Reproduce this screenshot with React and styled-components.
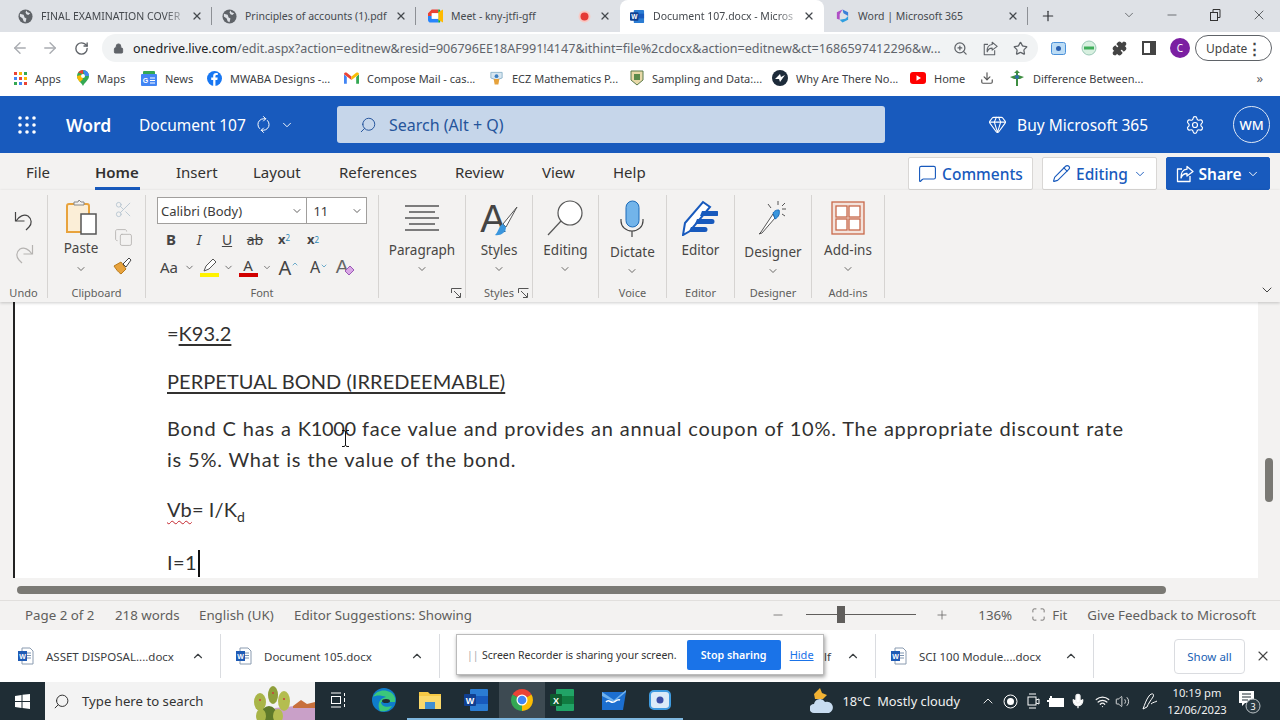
import React from "react";
import styled, { createGlobalStyle } from "styled-components";
import {
  ArrowLeft, ArrowRight, RotateCw, Lock, ZoomIn, Star, Puzzle, ChevronDown, ChevronUp, X, Minus, Plus,
  Search, Settings, Gem, MessageSquare, Pencil, Scissors, Copy, RefreshCw, Download, Maximize, Mic,
  Volume2, Wifi,
} from "lucide-react";

const GlobalStyle = createGlobalStyle`
  html, body { margin: 0; padding: 0; width: 1280px; height: 720px; overflow: hidden; background: #fff; }
  body { font-family: "Noto Sans", "Liberation Sans", sans-serif; }
  * { box-sizing: border-box; }
`;

const Screen = styled.div`
  width: 1280px;
  height: 720px;
  display: flex;
  flex-direction: column;
  position: relative;
  overflow: hidden;
`;

/* chrome */
const TabStrip = styled.div`
  height: 32px;
  background: #dee1e6;
  display: flex;
  align-items: stretch;
  padding-left: 8px;
  flex: none;
`;
const Tab = styled.div`
  width: 204px;
  display: flex;
  align-items: center;
  padding: 0 9px 0 ${(p) => p.$pl || 10}px;
  font-size: 10.5px;
  color: #45494e;
  position: relative;
  background: ${(p) => (p.$active ? "#fff" : "transparent")};
  border-radius: ${(p) => (p.$active ? "8px 8px 0 0" : "0")};
  &::after {
    content: "";
    display: ${(p) => (p.$sep ? "block" : "none")};
    position: absolute;
    right: 0;
    top: 7px;
    bottom: 7px;
    width: 1px;
    background: #8d9095;
  }
`;
const TabTitle = styled.span`
  flex: 1;
  margin-left: 8px;
  white-space: nowrap;
  mask-image: ${(p) => (p.$fade ? "linear-gradient(to right, #000 82%, transparent)" : "none")};
`;
const RecDot = styled.svg`
  margin-right: 8px;
`;
const WindowControls = styled.div`
  margin-left: auto;
  display: flex;
  align-items: center;
  padding-right: 13px;
  gap: 29px;
  color: #3c4043;
  height: 30px;
`;
const NewTab = styled.div`
  display: flex;
  align-items: center;
  margin-left: 12px;
  color: #303236;
`;
const Toolbar = styled.div`
  height: 32px;
  background: #fff;
  display: flex;
  align-items: center;
  padding-left: 11px;
  flex: none;
`;
const NavIcons = styled.div`
  display: flex;
  gap: 12px;
  width: 91px;
  align-items: center;
`;
const Reload = styled(RotateCw)`
  margin-left: 3px;
`;
const Omnibox = styled.div`
  width: 936px;
  margin-right: 13px;
  height: 28px;
  border-radius: 14px;
  background: #f1f3f4;
  display: flex;
  align-items: center;
  padding: 0 10px 0 11px;
  font-size: 12.55px;
  color: #60646b;
  white-space: nowrap;
`;
const UrlHost = styled.span`
  color: #202124;
`;
const Url = styled.span`
  margin-left: 9px;
  flex: 1;
`;
const OmniActions = styled.div`
  display: flex;
  gap: 15px;
  align-items: center;
  color: #5f6368;
`;
const ExtIcons = styled.div`
  display: flex;
  gap: 15px;
  align-items: center;
`;
const Avatar = styled.div`
  width: 20px;
  height: 20px;
  border-radius: 50%;
  background: #7b1fa2;
  color: #fff;
  font-size: 10px;
  display: flex;
  align-items: center;
  justify-content: center;
  margin-left: -1px;
`;
const UpdateBtn = styled.div`
  width: 77px;
  height: 26px;
  margin-left: 5px;
  border: 1px solid #5f6368;
  border-radius: 13px;
  font-size: 12px;
  color: #444;
  display: flex;
  align-items: center;
  justify-content: space-between;
  padding: 0 9px 0 10px;
`;
const Dots = styled.span`
  font-weight: 700;
  font-size: 15px;
  line-height: 1;
`;
const BookmarkBar = styled.div`
  height: 32px;
  background: #fff;
  display: flex;
  align-items: center;
  padding: 0 0 4px 14px;
  font-size: 11px;
  color: #3c4043;
  flex: none;
`;
const Bookmark = styled.div`
  width: ${(p) => p.$w}px;
  display: flex;
  align-items: center;
  gap: 8px;
  white-space: nowrap;
  flex: none;
`;
const More = styled.span`
  margin-left: auto;
  padding-right: 17px;
  font-size: 13px;
  color: #5f6368;
`;

/* word header */
const AppHeader = styled.div`
  height: 57px;
  background: #185abd;
  color: #fff;
  display: flex;
  align-items: center;
  padding-left: 18px;
  flex: none;
`;
const Brand = styled.span`
  font-size: 17.5px;
  font-weight: 600;
  margin-left: 30px;
  width: 73px;
`;
const DocName = styled.span`
  font-size: 15.5px;
  width: 117px;
  white-space: nowrap;
`;
const SyncIcon = styled(RefreshCw)`
  transform: rotate(-45deg);
`;
const DocCaret = styled(ChevronDown)`
  margin-left: 9px;
`;
const SearchBox = styled.div`
  width: 548px;
  height: 37px;
  margin-left: 43px;
  background: #c6d6ea;
  border-radius: 3px;
  display: flex;
  align-items: center;
  gap: 12px;
  padding-left: 22px;
  font-size: 16px;
  color: #25549b;
`;
const MirrorSearch = styled(Search)`
  transform: scaleX(-1);
`;
const HeaderRight = styled.div`
  margin-left: auto;
  display: flex;
  align-items: center;
  padding-right: 10px;
  font-size: 15.5px;
`;
const Initials = styled.div`
  width: 37px;
  height: 37px;
  border-radius: 50%;
  border: 1px solid #dfe8f5;
  font-size: 13px;
  display: flex;
  align-items: center;
  justify-content: center;
  font-weight: 500;
  margin-left: 28px;
`;
const Buy = styled.span`
  margin: 0 37px 0 10px;
`;

/* menu row */
const MenuRow = styled.div`
  height: 37px;
  background: #f3f2f1;
  display: flex;
  align-items: stretch;
  padding-left: 26px;
  flex: none;
`;
const MenuItem = styled.div`
  width: ${(p) => p.$w}px;
  font-size: 15px;
  color: #323130;
  font-weight: ${(p) => (p.$active ? 600 : 400)};
  display: flex;
  align-items: center;
  position: relative;
  height: 37px;
  &::after {
    content: "";
    display: ${(p) => (p.$active ? "block" : "none")};
    position: absolute;
    left: 0;
    bottom: 0;
    width: 45px;
    height: 3px;
    background: #185abd;
  }
`;
const MenuActions = styled.div`
  margin-left: auto;
  display: flex;
  gap: 9px;
  padding: 4px 10px 0 0;
`;
const ActionBtn = styled.div`
  width: ${(p) => p.$w}px;
  height: 33px;
  border-radius: 2px;
  border: 1px solid ${(p) => (p.$primary ? "#185abd" : "#d9d7d5")};
  background: ${(p) => (p.$primary ? "#185abd" : "#fff")};
  color: ${(p) => (p.$primary ? "#fff" : "#185abd")};
  font-size: 15.5px;
  font-weight: ${(p) => (p.$primary ? 600 : 500)};
  display: flex;
  align-items: center;
  justify-content: center;
  gap: 5px;
`;

/* ribbon */
const Ribbon = styled.div`
  height: 112px;
  background: #f3f2f1;
  display: flex;
  padding-top: 5px;
  position: relative;
  flex: none;
  box-shadow: 0 1px 3px rgba(0, 0, 0, 0.2);
  z-index: 2;
`;
const Group = styled.div`
  width: ${(p) => p.$w}px;
  height: 103px;
  border-right: 1px solid #d6d4d2;
  display: flex;
  flex-direction: column;
  flex: none;
  position: relative;
`;
const GroupBody = styled.div`
  flex: 1;
  display: flex;
  justify-content: ${(p) => p.$justify || "center"};
  padding-left: ${(p) => p.$pad || 0}px;
`;
const GroupLabel = styled.div`
  height: 17px;
  margin-bottom: -4px;
  font-size: 11px;
  line-height: 15px;
  color: #605e5c;
  text-align: center;
`;
const BigButton = styled.div`
  display: flex;
  flex-direction: column;
  align-items: center;
  color: #444;
  font-size: 13.5px;
`;
const BigIcon = styled.div`
  height: 46px;
  display: flex;
  align-items: center;
  justify-content: center;
`;
const BigLabel = styled.div`
  line-height: 19px;
  margin-top: ${(p) => p.$drop || 0}px;
  color: #484644;
`;
const Caret = styled.div`
  height: 17px;
  display: flex;
  align-items: center;
  color: #484644;
`;
const Launcher = styled.svg`
  position: absolute;
  right: 3px;
  bottom: -1px;
`;
const UndoCol = styled.div`
  display: flex;
  flex-direction: column;
  align-items: center;
  gap: 11px;
  padding-top: 14px;
  width: 46px;
`;
const ClipRow = styled.div`
  display: flex;
  width: 100%;
`;
const PasteCol = styled.div`
  width: 66px;
  display: flex;
  flex-direction: column;
  align-items: center;
  font-size: 13.5px;
  color: #484644;
`;
const PasteLabel = styled.div`
  line-height: 19px;
  margin-top: -2px;
  margin-bottom: 2px;
`;
const SmallCol = styled.div`
  display: flex;
  flex-direction: column;
  align-items: center;
  gap: 9px;
  padding-top: 5px;
  width: 18px;
`;
const FontRows = styled.div`
  display: flex;
  flex-direction: column;
`;
const SelectRow = styled.div`
  display: flex;
  height: 27px;
  margin: 2px 0 1px;
  width: 210px;
  border: 1px solid #a19f9d;
  background: #fff;
`;
const Select = styled.div`
  width: ${(p) => p.$w}px;
  display: flex;
  align-items: center;
  justify-content: space-between;
  padding: 0 3px 0 3px;
  font-size: 13px;
  color: #3b3a39;
  border-right: ${(p) => (p.$div ? "1px solid #a19f9d" : "none")};
`;
const ToolRow = styled.div`
  display: flex;
  height: 28px;
  align-items: center;
`;
const ToolBtn = styled.div`
  width: ${(p) => p.$w || 28}px;
  flex: none;
  display: flex;
  align-items: center;
  justify-content: center;
  color: #444;
  font-size: ${(p) => p.$size || 14}px;
  font-weight: ${(p) => (p.$bold ? 700 : 400)};
  font-style: ${(p) => (p.$italic ? "italic" : "normal")};
  text-decoration: ${(p) => p.$deco || "none"};
`;
const Scripted = styled.span`
  font-size: 8px;
  color: #2b88b8;
  align-self: ${(p) => (p.$up ? "flex-start" : "flex-end")};
  font-weight: 400;
  line-height: 10px;
  margin-top: ${(p) => (p.$up ? 5 : 0)}px;
  margin-bottom: ${(p) => (p.$up ? 0 : 5)}px;
`;
const SizeArrow = styled.span`
  display: flex;
  align-self: flex-start;
  margin-top: 6px;
  color: #2b88b8;
`;
const ColorA = styled.div`
  display: flex;
  flex-direction: column;
  align-items: center;
  font-size: 15px;
  line-height: 14px;
  color: #444;
`;
const ColorBar = styled.div`
  width: 19px;
  height: 4px;
  background: ${(p) => p.$c};
  margin-top: 1px;
`;
const RibbonToggle = styled.div`
  position: absolute;
  right: 5px;
  bottom: 4px;
  color: #444;
  display: flex;
`;

/* document */
const DocArea = styled.div`
  height: 278px;
  display: flex;
  background: #f3f2f1;
  flex: none;
`;
const Page = styled.div`
  margin-left: 13px;
  width: 1245px;
  background: #fff;
  border-left: 2px solid #222;
  padding: 16px 0 0 152px;
  color: #323130;
  font-family: Lato, "Noto Sans", sans-serif;
  font-size: 20px;
  line-height: 31px;
  position: relative;
  overflow: hidden;
  white-space: nowrap;
  margin-bottom: 2px;
`;
const Line = styled.div`
  margin-top: ${(p) => p.$mt || 0}px;
  letter-spacing: ${(p) => p.$ls}px;
  word-spacing: ${(p) => p.$ws || 0}px;
`;
const Tight = styled.span`
  letter-spacing: -0.3px;
`;
const Under = styled.span`
  text-decoration: underline;
  text-underline-offset: 3px;
`;
const Squiggle = styled.span`
  text-decoration: underline wavy #c4262e 1px;
  text-underline-offset: 3px;
`;
const Subscript = styled.span`
  font-size: 14px;
  vertical-align: -5px;
  line-height: 0;
`;
const TextCaret = styled.span`
  display: inline-block;
  width: 2px;
  height: 27px;
  background: #111;
  vertical-align: -7px;
  margin-left: 1px;
`;
const Pointer = styled.svg`
  position: absolute;
  left: 326px;
  top: 128px;
`;
const VScroll = styled.div`
  flex: 1;
  padding: 156px 0 0 7px;
`;
const VThumb = styled.div`
  width: 8px;
  height: 44px;
  border-radius: 4px;
  background: #7a7974;
`;
const HScroll = styled.div`
  height: 20px;
  background: #f3f2f1;
  padding: 6px 0 0 17px;
  flex: none;
`;
const HThumb = styled.div`
  width: 1149px;
  height: 8px;
  border-radius: 4px;
  background: #7a7974;
`;
const StatusBar = styled.div`
  height: 30px;
  background: #f3f2f1;
  border-top: 1px solid #e1dfdd;
  display: flex;
  align-items: center;
  padding: 0 0 2px 25px;
  font-size: 13.3px;
  color: #605e5c;
  flex: none;
`;
const StatusItem = styled.span`
  width: ${(p) => p.$w}px;
  margin-left: ${(p) => p.$ml || 0}px;
  flex: none;
  white-space: nowrap;
  display: flex;
  align-items: center;
  gap: ${(p) => p.$gap || 0}px;
`;
const StatusRight = styled.div`
  margin-left: auto;
  display: flex;
  align-items: center;
  padding-right: 24px;
  white-space: nowrap;
`;
const Slider = styled.div`
  width: 110px;
  height: 1px;
  background: #605e5c;
  margin: 0 19px 0 21px;
  display: flex;
  align-items: center;
  padding-left: 31px;
`;
const SliderThumb = styled.div`
  width: 8px;
  height: 17px;
  background: #605e5c;
`;

/* downloads */
const DownloadBar = styled.div`
  height: 52px;
  background: #fff;
  display: flex;
  align-items: center;
  padding-left: 18px;
  font-size: 11.5px;
  color: #3c4043;
  flex: none;
`;
const DownloadItem = styled.div`
  width: ${(p) => p.$w || 203}px;
  height: 44px;
  display: flex;
  align-items: center;
  border-right: 1px solid #dadce0;
  padding-right: 15px;
  flex: none;
  margin-left: ${(p) => p.$ml || 0}px;
`;
const DownloadName = styled.span`
  margin-left: 12px;
  flex: 1;
  white-space: nowrap;
  text-align: ${(p) => (p.$right ? "right" : "left")};
  padding-right: ${(p) => (p.$right ? 15 : 0)}px;
`;
const ShowAll = styled.div`
  margin-left: auto;
  width: 71px;
  height: 35px;
  border: 1px solid #dadce0;
  border-radius: 4px;
  color: #1a5fb4;
  display: flex;
  align-items: center;
  justify-content: center;
`;
const CloseBar = styled.div`
  width: 35px;
  display: flex;
  justify-content: center;
  color: #444;
`;
const ShareNotice = styled.div`
  position: absolute;
  left: 456px;
  top: 634px;
  width: 368px;
  height: 41px;
  background: #fff;
  border: 1px solid #bbb;
  box-shadow: 1px 2px 4px rgba(0, 0, 0, 0.4);
  display: flex;
  align-items: center;
  padding-left: 10px;
  font-size: 10.5px;
  color: #333;
  z-index: 3;
  white-space: nowrap;
`;
const Grip = styled.span`
  color: #aaa;
  width: 15px;
`;
const StopBtn = styled.div`
  width: 94px;
  height: 30px;
  margin: 0 9px 0 10px;
  border-radius: 2px;
  background: #1a73e8;
  color: #fff;
  font-weight: 600;
  font-size: 10.7px;
  display: flex;
  align-items: center;
  justify-content: center;
`;
const HideLink = styled.span`
  color: #1a73e8;
  text-decoration: underline;
  font-size: 11px;
`;

/* taskbar */
const Taskbar = styled.div`
  height: 38px;
  background: #1f2d35;
  display: flex;
  align-items: stretch;
  color: #fff;
  flex: none;
`;
const StartBtn = styled.div`
  width: 45px;
  display: flex;
  align-items: center;
  justify-content: center;
`;
const TaskSearch = styled.div`
  width: 270px;
  background: #f3f3f3;
  display: flex;
  align-items: center;
  padding-left: 8px;
  gap: 12px;
  color: #333;
  font-size: 13.2px;
  overflow: hidden;
`;
const Cactus = styled.svg`
  margin-left: auto;
  flex: none;
`;
const TaskApp = styled.div`
  width: 46px;
  display: flex;
  align-items: center;
  justify-content: center;
  flex: none;
  padding-right: ${(p) => p.$pr || 0}px;
  background: ${(p) => (p.$hi ? "#3d4a52" : "transparent")};
  border-bottom: 2px solid ${(p) => (p.$on ? "#7fb8e0" : "transparent")};
`;
const Tray = styled.div`
  margin-left: auto;
  display: flex;
  align-items: center;
  font-size: 12.8px;
  color: #f1f1f1;
`;
const TrayIcon = styled.div`
  width: ${(p) => p.$w || 22.5}px;
  margin-left: ${(p) => p.$ml || 0}px;
  display: flex;
  justify-content: center;
  flex: none;
`;
const Weather = styled.div`
  display: flex;
  align-items: center;
  gap: 8px;
  margin-right: 17px;
  white-space: nowrap;
`;
const Clock = styled.div`
  width: 60px;
  margin-left: 7px;
  text-align: center;
  font-size: 11.2px;
  line-height: 17px;
  white-space: nowrap;
`;
const Notif = styled.div`
  width: 53px;
  padding-right: 7px;
  display: flex;
  justify-content: center;
`;

/* small drawings */
const Globe = () => (
  <svg width="15" height="15" viewBox="0 0 16 16">
    <circle cx="8" cy="8" r="7.5" fill="#5f6368" />
    <path d="M2 5l4 1 1 3 2 1-1 4-2-1-1-3-3-2zM9 1.500l1 2 3 1-2 2-2-1-1-2z" fill="#dee1e6" />
  </svg>
);
const MeetIcon = () => (
  <svg width="15" height="14" viewBox="0 0 16 14">
    <path d="M0 4l4-4h7v4H4v3H0z" fill="#ea4335" />
    <path d="M0 7h4v3h7v4H3a3 3 0 0 1-3-3z" fill="#2684fc" />
    <path d="M11 0h1a1 1 0 0 1 1 1v12a1 1 0 0 1-1 1h-1z" fill="#00ac47" />
    <path d="M11 3l5-3v14l-5-3z" fill="#ffba00" />
    <rect x="4" y="4" width="7" height="6" fill="#fff" />
  </svg>
);
const WordIcon = ({ size = 15 }) => (
  <svg width={size} height={size} viewBox="0 0 16 16">
    <rect x="4" y="1" width="11" height="14" rx="1" fill="#2b7cd3" />
    <rect x="4" y="5" width="11" height="5" fill="#185abd" />
    <rect x="0" y="3.500" width="9" height="9" rx="1" fill="#103f91" />
    <text x="4.500" y="10.600" fontSize="7" fontWeight="700" fill="#fff" textAnchor="middle" fontFamily="Liberation Sans">W</text>
  </svg>
);
const Office = () => (
  <svg width="15" height="16" viewBox="0 0 16 16">
    <path d="M8 1l6 3v4L9 5z" fill="#3a7fd8" />
    <path d="M8 1L2 4v7l3 1V6z" fill="#b04fc6" />
    <path d="M14 8v4l-6 3-3-3 6-1z" fill="#2f9fe0" />
    <circle cx="8.500" cy="8" r="2.500" fill="#dee1e6" />
  </svg>
);
const DocxIcon = () => (
  <svg width="16" height="18" viewBox="0 0 16 18">
    <path d="M4 1h8l3 3v13H4z" fill="#fff" stroke="#8a9bb0" />
    <path d="M9 6h4M9 8.500h4M9 11h4" stroke="#7d94b0" />
    <rect x="0" y="4" width="9" height="10" fill="#1f5bb5" />
    <text x="4.500" y="11.500" fontSize="7" fontWeight="700" fill="#fff" textAnchor="middle" fontFamily="Liberation Sans">W</text>
  </svg>
);
const ShareBox = ({ size = 16, color = "currentColor", width = 1.3 }) => (
  <svg width={size} height={size} viewBox="0 0 18 18" fill="none" stroke={color} strokeWidth={width} strokeLinejoin="round">
    <path d="M6 4H1.500v12.500H14V11" />
    <path d="M11 1.500L17 6.500 11 11V8.500C8 8.500 6 10 5 13c-.3-5 2-8.500 6-8.800z" />
  </svg>
);
const UndoIcon = ({ flip, color }) => (
  <svg width="22" height="22" viewBox="0 0 22 22" fill="none" stroke={color} strokeWidth="1.200" transform={flip ? "scale(-1 1)" : undefined}>
    <path d="M2.500 3v9h9" />
    <path d="M3 12c3-5 8-7 12-5 4 3 4 8 1 11l-3 3" />
  </svg>
);
const AppsIcon = () => (
  <svg width="13" height="13" viewBox="0 0 13 13">
    {[0, 1, 2].flatMap((r) =>
      [0, 1, 2].map((c) => (
        <rect key={`${r}${c}`} x={c * 5} y={r * 5} width="3" height="3"
          fill={["#ea4335", "#fbbc04", "#34a853", "#4285f4", "#ea4335", "#fbbc04", "#34a853", "#4285f4", "#ea4335"][r * 3 + c]} />
      ))
    )}
  </svg>
);
const MapsIcon = () => (
  <svg width="12" height="16" viewBox="0 0 12 16">
    <path d="M6 0a6 6 0 0 1 6 6c0 4-4 6-6 10C4 12 0 10 0 6a6 6 0 0 1 6-6z" fill="#34a853" />
    <path d="M1 2.500A6 6 0 0 1 6 0v4z" fill="#ea4335" />
    <path d="M6 0a6 6 0 0 1 6 6H8z" fill="#4285f4" />
    <path d="M0 6l4-1 2 4-3 3C1 10 0 8 0 6z" fill="#fbbc04" />
    <circle cx="6" cy="6" r="2" fill="#fff" />
  </svg>
);
const NewsIcon = () => (
  <svg width="16" height="15" viewBox="0 0 16 15">
    <rect x="2" y="0" width="12" height="5" rx="1" fill="#34a853" />
    <rect x="0" y="3" width="16" height="12" rx="1" fill="#4285f4" />
    <text x="4.500" y="11.500" fontSize="7" fontWeight="700" fill="#fff" textAnchor="middle" fontFamily="Liberation Sans">G</text>
    <path d="M9 7h5M9 9.500h5M9 12h5" stroke="#fff" />
  </svg>
);
const FbIcon = () => (
  <svg width="15" height="15" viewBox="0 0 16 16">
    <circle cx="8" cy="8" r="8" fill="#1877f2" />
    <path d="M9 16V9.500h2l.4-2.500H9V5.500c0-.8.3-1.200 1.300-1.200h1.200V2.100C11 2 10.300 2 9.700 2 7.800 2 6.600 3.100 6.600 5.100V7H4.500v2.500h2.100V16z" fill="#fff" />
  </svg>
);
const GmailIcon = () => (
  <svg width="15" height="12" viewBox="0 0 16 12">
    <path d="M0 2v10h3V5z" fill="#4285f4" />
    <path d="M13 5v7h3V2z" fill="#34a853" />
    <path d="M0 2c0-2 2-2.500 3-1.500L8 4.500 8 8 0 2z" fill="#ea4335" />
    <path d="M16 2c0-2-2-2.500-3-1.500L8 4.500V8z" fill="#fbbc04" />
  </svg>
);
const EczIcon = () => (
  <svg width="15" height="16" viewBox="0 0 16 16">
    <path d="M2 2h12v6l-6 2-6-2z" fill="#d8e6f0" stroke="#8fb5cc" />
    <path d="M5 9h6l-1 6H6z" fill="#e6a23c" />
    <circle cx="8" cy="6" r="2" fill="#3f7fbf" />
  </svg>
);
const ShieldIcon = () => (
  <svg width="14" height="16" viewBox="0 0 14 16">
    <path d="M1 1h12v9l-6 5-6-5z" fill="#e8d9a8" stroke="#5a7a4a" />
    <rect x="4" y="4" width="6" height="6" fill="#5a8a4a" />
  </svg>
);
const WhyIcon = () => (
  <svg width="16" height="16" viewBox="0 0 16 16">
    <circle cx="8" cy="8" r="8" fill="#1d2b3a" />
    <path d="M3 9l5-5 1 3 4-2-5 7-1-3z" fill="#fff" />
  </svg>
);
const YtIcon = () => (
  <svg width="16" height="12" viewBox="0 0 16 12">
    <rect width="16" height="12" rx="3" fill="#f00" />
    <path d="M6.500 3.200v5.600L11 6z" fill="#fff" />
  </svg>
);
const TreeIcon = () => (
  <svg width="16" height="16" viewBox="0 0 16 16">
    <path d="M8 0l3 3H9v2l6 2-4 2H9v7H7V9H5L1 7l6-2V3H5z" fill="#3e8e41" />
    <circle cx="8" cy="7" r="2" fill="#2f6fa8" />
  </svg>
);
const RecExt = () => (
  <svg width="15" height="13" viewBox="0 0 15 13">
    <rect x=".5" y=".5" width="14" height="12" rx="2" fill="#bcdcf5" stroke="#4a90d9" />
    <circle cx="7.500" cy="6.500" r="2.500" fill="#2a5fb0" />
  </svg>
);
const GreenExt = () => (
  <svg width="16" height="16" viewBox="0 0 16 16">
    <circle cx="8" cy="8" r="7" fill="#d8f0e0" stroke="#9cc9b8" />
    <path d="M3 8h10" stroke="#3fae5a" strokeWidth="3" />
  </svg>
);
const SidePanel = () => (
  <svg width="14" height="14" viewBox="0 0 14 14">
    <rect x="1" y="1" width="12" height="12" fill="#fff" stroke="#444" strokeWidth="2" />
    <rect x="8" y="1" width="5" height="12" fill="#444" />
  </svg>
);
const Waffle = () => (
  <svg width="18" height="18" viewBox="0 0 18 18" fill="#fff">
    {[0, 1, 2].flatMap((r) => [0, 1, 2].map((c) => <circle key={`${r}${c}`} cx={2 + c * 7} cy={2 + r * 7} r="1.800" />))}
  </svg>
);
const PasteIcon = () => (
  <svg width="34" height="38" viewBox="0 0 34 38" fill="none">
    <path d="M7 5h16a2 2 0 0 1 2 2v26H3V7a2 2 0 0 1 2-2z" fill="#fbeed7" stroke="#e8a33d" strokeWidth="2" />
    <path d="M10 6V3h4l1-2 2 2h3v3z" fill="#f3f2f1" stroke="#888" />
    <rect x="17" y="15" width="15" height="20" fill="#fff" stroke="#555" strokeWidth="1.500" />
  </svg>
);
const BrushIcon = () => (
  <svg width="20" height="19" viewBox="0 0 20 19" fill="none">
    <path d="M1 10l7-4 5 7-5 5C5 16 3 13 1 10z" fill="#e8a33d" stroke="#b87a1c" />
    <path d="M10 8l6-6 2 2-5 7z" fill="#fff" stroke="#444" />
  </svg>
);
const ParaIcon = () => (
  <svg width="36" height="27" viewBox="0 0 36 27" stroke="#555" strokeWidth="1.300">
    <path d="M1 1h34M5 7h26M1 13h34M5 19h26M1 25h34" />
  </svg>
);
const StylesIcon = () => (
  <svg width="38" height="46" viewBox="0 0 38 46" fill="none">
    <text x="13" y="37" fontSize="38" fontFamily="Liberation Sans" fill="#444" textAnchor="middle">A</text>
    <path d="M37 12L23 29l3 3z" fill="#fff" stroke="#555" />
    <path d="M15 40c5 1 11-2 11-8l-3-3c-4 1-4 7-8 11z" fill="#3a96dd" />
  </svg>
);
const Magnifier = () => (
  <svg width="36" height="37" viewBox="0 0 36 37" fill="none">
    <circle cx="23" cy="13" r="12" fill="#fff" stroke="#555" strokeWidth="1.200" />
    <path d="M14 21L1 35" stroke="#555" strokeWidth="1.200" />
  </svg>
);
const MicIcon = () => (
  <svg width="24" height="37" viewBox="0 0 24 37" fill="none">
    <rect x="6" y="1" width="13" height="26" rx="6.500" fill="#72b4ea" stroke="#1c6bb8" />
    <path d="M1 19v2a11 10 0 0 0 22 0v-2M12 31v6" stroke="#444" strokeWidth="1.200" />
  </svg>
);
const EditorIcon = () => (
  <svg width="36" height="36" viewBox="0 0 36 36" fill="none">
    <path d="M1 35l2-12L21 2l7 5L8 31z" fill="#fff" stroke="#185abd" strokeWidth="2" />
    <path d="M20 11h15a2 2 0 0 1 0 5H18zM15 19h15a2 2 0 0 1 0 5H13zM9 27h14a2 2 0 0 1 0 5H7z" fill="#185abd" />
  </svg>
);
const DesignerIcon = () => (
  <svg width="30" height="34" viewBox="0 0 30 34" fill="none" stroke="#555">
    <path d="M15 13L3 31l-2 2 3-1 13-15z" fill="#fff" />
    <path d="M15 12c2-3 4-3 6-3 1 3 0 7-4 9z" fill="#3a96dd" stroke="#1c6bb8" />
    <path d="M10 3l3 4M20 0v4M28 8h-4M27 15l-3-2M27 2l-3 3" />
  </svg>
);
const AddinsIcon = () => (
  <svg width="34" height="34" viewBox="0 0 34 34" fill="none" stroke="#c8694a" strokeWidth="1.300">
    <rect x="1" y="1" width="32" height="32" fill="#f3e3dc" />
    <rect x="5" y="5" width="11" height="11" fill="#fff" />
    <rect x="18" y="5" width="11" height="11" fill="#fff" />
    <rect x="5" y="18" width="11" height="11" fill="#fff" />
    <rect x="18" y="18" width="11" height="11" fill="#fff" />
  </svg>
);
const ClearFormat = () => (
  <svg width="22" height="24" viewBox="0 0 22 24" fill="none">
    <text x="8" y="18" fontSize="19" fontFamily="Liberation Sans" fill="#666" textAnchor="middle">A</text>
    <path d="M11 16l5-5 4 4-5 5z" fill="#d9a8e6" stroke="#9b59b6" />
  </svg>
);
const Corner = () => (
  <Launcher width="11" height="11" viewBox="0 0 11 11" fill="none" stroke="#555">
    <path d="M.5 5V.5H10.500M3 3l6 6M5 9.500h4.500V5" />
  </Launcher>
);
const SmallCaret = ({ size = 12 }) => <ChevronDown size={size} strokeWidth={1.6} />;
const Big = ({ icon, label, drop, noCaret }) => (
  <BigButton>
    <BigIcon>{icon}</BigIcon>
    <BigLabel $drop={drop}>{label}</BigLabel>
    {noCaret ? null : <Caret><SmallCaret /></Caret>}
  </BigButton>
);
const Highlighter = () => (
  <ColorA>
    <svg width="18" height="14" viewBox="0 0 18 14" fill="none" stroke="#555">
      <path d="M3 13l2-5 7-7 3 3-7 7z" fill="#fff" />
    </svg>
    <ColorBar $c="#fff200" />
  </ColorA>
);
const WinLogo = () => (
  <svg width="15" height="15" viewBox="0 0 15 15" fill="#fff">
    <path d="M0 2l6.500-1v6H0zM7.500.8L15 0v7H7.500zM0 8h6.500v6L0 13zM7.500 8H15v7l-7.500-1z" />
  </svg>
);
const CactusArt = () => (
  <Cactus width="70" height="38" viewBox="0 0 70 38">
    <path d="M30 38V26l40-4v16z" fill="#c9a0c8" />
    <path d="M48 24l8-6 6 4 8-2v6H48z" fill="#c8703c" />
    <ellipse cx="15" cy="20" rx="6" ry="9" fill="#a9b548" />
    <ellipse cx="28" cy="13" rx="5" ry="9" fill="#8f9f3a" />
    <ellipse cx="39" cy="19" rx="6" ry="10" fill="#b4bd50" />
    <ellipse cx="24" cy="33" rx="8" ry="9" fill="#5f7a2a" />
    <ellipse cx="16" cy="34" rx="5" ry="7" fill="#a9b548" />
    <ellipse cx="33" cy="34" rx="5" ry="7" fill="#b4bd50" />
    <circle cx="15" cy="18" r="1" fill="#c83c3c" />
    <circle cx="39" cy="17" r="1" fill="#c83c3c" />
    <circle cx="28" cy="11" r="1" fill="#c83c3c" />
  </Cactus>
);
const TaskView = () => (
  <svg width="16" height="16" viewBox="0 0 16 16" fill="none" stroke="#fff">
    <path d="M1 1h10M1 15h10" />
    <rect x="1.500" y="4.500" width="9" height="7" />
    <path d="M14.500 1v3M14.500 6v4M14.500 12v3" />
  </svg>
);
const EdgeIcon = () => (
  <svg width="24" height="24" viewBox="0 0 24 24">
    <circle cx="12" cy="12" r="12" fill="#0f7ccb" />
    <path d="M1 9c3-7 12-8 17-5 4 2 6 6 5 10H9c0 4 5 6 11 4-3 5-8 6-12 5 -2-4-3-12 6-14C9 7 4 7 1 9z" fill="#3bc77a" />
    <ellipse cx="14" cy="13" rx="4" ry="2" fill="#1f2d35" />
  </svg>
);
const FolderIcon = () => (
  <svg width="22" height="20" viewBox="0 0 22 20">
    <path d="M0 2h9l2 2h11v14H0z" fill="#f6c945" />
    <rect y="6" width="22" height="13" fill="#fbd96a" />
    <rect x="6" y="12" width="10" height="7" fill="#3f8fd2" />
  </svg>
);
const TaskOffice = ({ kind }) => (
  <svg width="24" height="22" viewBox="0 0 24 22">
    <rect x="6" y="0" width="18" height="22" rx="1" fill={kind === "x" ? "#21a366" : "#2b7cd3"} />
    <rect x="6" y="7" width="18" height="8" fill={kind === "x" ? "#107c41" : "#185abd"} />
    <rect x="0" y="5" width="12" height="12" rx="1" fill={kind === "x" ? "#0e5c2f" : "#103f91"} />
    <text x="6" y="14.500" fontSize="9" fontWeight="700" fill="#fff" textAnchor="middle" fontFamily="Liberation Sans">{kind === "x" ? "X" : "W"}</text>
  </svg>
);
const ChromeIcon = () => (
  <svg width="24" height="24" viewBox="0 0 24 24">
    <path d="M12 12L21.500 6.500A11 11 0 0 0 2.500 6.500z" fill="#ea4335" />
    <path d="M12 12L12 23A11 11 0 0 0 21.500 6.500z" fill="#fbbc04" />
    <path d="M12 12L2.500 6.500A11 11 0 0 0 12 23z" fill="#34a853" />
    <circle cx="12" cy="12" r="5.500" fill="#fff" />
    <circle cx="12" cy="12" r="4.300" fill="#4285f4" />
  </svg>
);
const MailIcon = () => (
  <svg width="24" height="20" viewBox="0 0 24 20">
    <path d="M0 2h24l-3 18H0z" fill="#1c6fd0" />
    <path d="M0 2l12 8L24 0v2L12 12 0 6z" fill="#6fb2ee" />
    <path d="M4 12c3-4 5 2 8 0s4-3 6-2" stroke="#fff" strokeWidth="1.500" fill="none" />
  </svg>
);
const RecorderIcon = () => (
  <svg width="22" height="20" viewBox="0 0 22 20">
    <rect x="1" y="1" width="20" height="18" rx="4" fill="#dcebf8" stroke="#3f9be0" strokeWidth="2" />
    <circle cx="11" cy="10" r="3.500" fill="#3c4fa8" />
  </svg>
);
const WeatherIcon = () => (
  <svg width="24" height="26" viewBox="0 0 24 26">
    <path d="M10 0l2 5 5 2-4 4H5L4 6z" fill="#f2b233" />
    <path d="M4 25a4.500 4.500 0 0 1 0-9 6 6 0 0 1 11-2 5.500 5.500 0 0 1 4 11z" fill="#c8dcf0" />
  </svg>
);
const RecordDot = () => (
  <svg width="15" height="15" viewBox="0 0 15 15" fill="none">
    <circle cx="7.500" cy="7.500" r="6.500" stroke="#fff" />
    <circle cx="7.500" cy="7.500" r="3.500" fill="#fff" />
  </svg>
);
const CamTray = () => (
  <svg width="14" height="18" viewBox="0 0 14 18" fill="none" stroke="#fff">
    <rect x="2" y="5" width="8" height="8" />
    <path d="M10 8l3-1v5l-3-1M3 2h7M3 16h7" />
  </svg>
);
const BatteryTray = () => (
  <svg width="18" height="13" viewBox="0 0 18 13" fill="#fff">
    <rect x="2" y="3" width="15" height="9" />
    <path d="M3 1h2v2H3zM0 5h2v2H0z" />
  </svg>
);
const PenTray = () => (
  <svg width="16" height="18" viewBox="0 0 16 18" fill="none" stroke="#fff">
    <path d="M1 17c2-5 3-9 6-13 2-3 6-3 4 1-2 3-5 7-6 10zM9 12c2-2 5-2 6-3" />
  </svg>
);
const NotifIcon = () => (
  <svg width="26" height="26" viewBox="0 0 26 26">
    <path d="M2 3h15v12H8l-3 3v-3H2z" fill="#fff" />
    <path d="M5 6h9M5 9h9M5 12h6" stroke="#1f2d35" />
    <circle cx="16" cy="18" r="7" fill="#2b3a42" stroke="#b9c0c4" />
    <text x="16" y="21.500" fontSize="9" fill="#fff" textAnchor="middle" fontFamily="Noto Sans">3</text>
  </svg>
);

export default function App() {
  return (
    <Screen>
      <GlobalStyle />
      <TabStrip>
        <Tab $sep>
          <Globe /><TabTitle $fade>FINAL EXAMINATION COVER</TabTitle><X size={12} strokeWidth={2.5} />
        </Tab>
        <Tab $sep>
          <Globe /><TabTitle>Principles of accounts (1).pdf</TabTitle><X size={12} strokeWidth={2.5} />
        </Tab>
        <Tab $pl={12}>
          <MeetIcon /><TabTitle>Meet - kny-jtfi-gff</TabTitle>
          <RecDot width="13" height="13" viewBox="0 0 13 13">
            <circle cx="6.500" cy="6.500" r="6" fill="#f8c9c4" />
            <circle cx="6.500" cy="6.500" r="4" fill="#e53935" />
          </RecDot>
          <X size={12} strokeWidth={2.5} />
        </Tab>
        <Tab $active>
          <WordIcon /><TabTitle $fade>Document 107.docx - Micros</TabTitle><X size={12} strokeWidth={2.5} />
        </Tab>
        <Tab $sep $pl={11}>
          <Office /><TabTitle>Word | Microsoft 365</TabTitle><X size={12} strokeWidth={2.5} />
        </Tab>
        <NewTab><Plus size={16} strokeWidth={1.8} /></NewTab>
        <WindowControls>
          <ChevronDown size={14} strokeWidth={1.2} />
          <Minus size={14} strokeWidth={1.2} />
          <svg width="14" height="14" viewBox="0 0 14 14" fill="none" stroke="#333">
            <rect x="2.500" y="4.500" width="7" height="8" fill="#dee1e6" />
            <path d="M5 4V1.500h7v8h-2.500" />
          </svg>
          <X size={16} strokeWidth={1.2} />
        </WindowControls>
      </TabStrip>

      <Toolbar>
        <NavIcons>
          <ArrowLeft size={18} color="#a9acb1" strokeWidth={1.8} />
          <ArrowRight size={18} color="#a9acb1" strokeWidth={1.8} />
          <Reload size={15} color="#5f6368" strokeWidth={2.2} />
        </NavIcons>
        <Omnibox>
          <Lock size={11} color="#5f6368" fill="#5f6368" />
          <Url>
            <UrlHost>onedrive.live.com</UrlHost>/edit.aspx?action=editnew&resid=906796EE18AF991!4147&ithint=file%2cdocx&action=editnew&ct=1686597412296&w...
          </Url>
          <OmniActions>
            <ZoomIn size={15} />
            <ShareBox size={15} />
            <Star size={15} />
          </OmniActions>
        </Omnibox>
        <ExtIcons>
          <RecExt />
          <GreenExt />
          <Puzzle size={15} color="#444" fill="#444" />
          <SidePanel />
          <Avatar>C</Avatar>
        </ExtIcons>
        <UpdateBtn>Update<Dots>⋮</Dots></UpdateBtn>
      </Toolbar>

      <BookmarkBar>
        <Bookmark $w={63}><AppsIcon />Apps</Bookmark>
        <Bookmark $w={64}><MapsIcon />Maps</Bookmark>
        <Bookmark $w={66}><NewsIcon />News</Bookmark>
        <Bookmark $w={137}><FbIcon />MWABA Designs -...</Bookmark>
        <Bookmark $w={145}><GmailIcon />Compose Mail - cas...</Bookmark>
        <Bookmark $w={141}><EczIcon />ECZ Mathematics P...</Bookmark>
        <Bookmark $w={142}><ShieldIcon />Sampling and Data:...</Bookmark>
        <Bookmark $w={138}><WhyIcon />Why Are There No...</Bookmark>
        <Bookmark $w={70}><YtIcon />Home</Bookmark>
        <Bookmark $w={29}><Download size={14} color="#555" /></Bookmark>
        <Bookmark $w={160}><TreeIcon />Difference Between...</Bookmark>
        <More>»</More>
      </BookmarkBar>

      <AppHeader>
        <Waffle />
        <Brand>Word</Brand>
        <DocName>Document 107</DocName>
        <SyncIcon size={15} strokeWidth={1.5} />
        <DocCaret size={14} strokeWidth={1.6} />
        <SearchBox><MirrorSearch size={18} strokeWidth={1.3} />Search (Alt + Q)</SearchBox>
        <HeaderRight>
          <Gem size={19} strokeWidth={1.4} />
          <Buy>Buy Microsoft 365</Buy>
          <Settings size={20} strokeWidth={1.4} />
          <Initials>WM</Initials>
        </HeaderRight>
      </AppHeader>

      <MenuRow>
        <MenuItem $w={69}>File</MenuItem>
        <MenuItem $w={81} $active>Home</MenuItem>
        <MenuItem $w={77}>Insert</MenuItem>
        <MenuItem $w={86}>Layout</MenuItem>
        <MenuItem $w={116}>References</MenuItem>
        <MenuItem $w={87}>Review</MenuItem>
        <MenuItem $w={71}>View</MenuItem>
        <MenuItem $w={50}>Help</MenuItem>
        <MenuActions>
          <ActionBtn $w={125}><MessageSquare size={19} strokeWidth={1.4} />Comments</ActionBtn>
          <ActionBtn $w={115}><Pencil size={19} strokeWidth={1.4} />Editing<SmallCaret size={14} /></ActionBtn>
          <ActionBtn $w={104} $primary><ShareBox size={18} />Share<SmallCaret size={14} /></ActionBtn>
        </MenuActions>
      </MenuRow>

      <Ribbon>
        <Group $w={48}>
          <GroupBody>
            <UndoCol>
              <UndoIcon color="#444" />
              <UndoIcon flip color="#b5b3b1" />
            </UndoCol>
          </GroupBody>
          <GroupLabel>Undo</GroupLabel>
        </Group>
        <Group $w={98}>
          <GroupBody>
            <ClipRow>
              <PasteCol>
                <BigIcon><PasteIcon /></BigIcon>
                <PasteLabel>Paste</PasteLabel>
                <Caret><SmallCaret /></Caret>
              </PasteCol>
              <SmallCol>
                <Scissors size={19} color="#b5c4d0" strokeWidth={1.1} />
                <Copy size={19} color="#b5b3b1" strokeWidth={1.1} />
                <BrushIcon />
              </SmallCol>
            </ClipRow>
          </GroupBody>
          <GroupLabel>Clipboard</GroupLabel>
        </Group>
        <Group $w={233}>
          <GroupBody $justify="flex-start" $pad={11}>
            <FontRows>
              <SelectRow>
                <Select $w={149} $div>Calibri (Body)<SmallCaret /></Select>
                <Select $w={59}>&nbsp;11<SmallCaret /></Select>
              </SelectRow>
              <ToolRow>
                <ToolBtn $bold $size={15}>B</ToolBtn>
                <ToolBtn $italic>I</ToolBtn>
                <ToolBtn $deco="underline">U</ToolBtn>
                <ToolBtn $deco="line-through">ab</ToolBtn>
                <ToolBtn $bold $size={13} $w={30}>x<Scripted>2</Scripted></ToolBtn>
                <ToolBtn $bold $size={13} $w={28}>x<Scripted $up>2</Scripted></ToolBtn>
              </ToolRow>
              <ToolRow>
                <ToolBtn $w={24} $size={15}>Aa</ToolBtn>
                <ToolBtn $w={16}><SmallCaret size={11} /></ToolBtn>
                <ToolBtn $w={25}><Highlighter /></ToolBtn>
                <ToolBtn $w={12}><SmallCaret size={11} /></ToolBtn>
                <ToolBtn $w={28}><ColorA>A<ColorBar $c="#d10000" /></ColorA></ToolBtn>
                <ToolBtn $w={10}><SmallCaret size={11} /></ToolBtn>
                <ToolBtn $w={34} $size={20}>A<SizeArrow><ChevronUp size={8} strokeWidth={2} /></SizeArrow></ToolBtn>
                <ToolBtn $w={26} $size={16}>A<SizeArrow><ChevronDown size={8} strokeWidth={2} /></SizeArrow></ToolBtn>
                <ToolBtn $w={26}><ClearFormat /></ToolBtn>
              </ToolRow>
            </FontRows>
          </GroupBody>
          <GroupLabel>Font</GroupLabel>
        </Group>
        <Group $w={87}>
          <GroupBody><Big icon={<ParaIcon />} label="Paragraph" /></GroupBody>
          <GroupLabel>&nbsp;</GroupLabel>
          <Corner />
        </Group>
        <Group $w={67}>
          <GroupBody><Big icon={<StylesIcon />} label="Styles" /></GroupBody>
          <GroupLabel>Styles</GroupLabel>
          <Corner />
        </Group>
        <Group $w={66}>
          <GroupBody><Big icon={<Magnifier />} label="Editing" /></GroupBody>
          <GroupLabel>&nbsp;</GroupLabel>
        </Group>
        <Group $w={68}>
          <GroupBody><Big icon={<MicIcon />} label="Dictate" drop={2} /></GroupBody>
          <GroupLabel>Voice</GroupLabel>
        </Group>
        <Group $w={68}>
          <GroupBody><Big icon={<EditorIcon />} label="Editor" noCaret /></GroupBody>
          <GroupLabel>Editor</GroupLabel>
        </Group>
        <Group $w={77}>
          <GroupBody><Big icon={<DesignerIcon />} label="Designer" drop={2} /></GroupBody>
          <GroupLabel>Designer</GroupLabel>
        </Group>
        <Group $w={73}>
          <GroupBody><Big icon={<AddinsIcon />} label="Add-ins" /></GroupBody>
          <GroupLabel>Add-ins</GroupLabel>
        </Group>
        <RibbonToggle><ChevronDown size={16} strokeWidth={1.5} /></RibbonToggle>
      </Ribbon>

      <DocArea>
        <Page>
          <Line $ls={0}>=<Under>K93.2</Under></Line>
          <Line $mt={17} $ls={0.05}><Under>PERPETUAL BOND (IRREDEEMABLE)</Under></Line>
          <Line $mt={16} $ls={0.73} $ws={0.3}>
            Bond C has a <Tight>K1000</Tight> face value and provides an annual coupon of 10%. The appropriate discount rate<br />
            is 5%. What is the value of the bond.
          </Line>
          <Line $mt={19} $ls={0.1}><Squiggle>Vb</Squiggle>= I/K<Subscript>d</Subscript></Line>
          <Line $mt={22} $ls={0.4}>I=1<TextCaret /></Line>
          <Pointer width="9" height="17" viewBox="0 0 9 17" fill="none" stroke="#111">
            <path d="M1 .5h2.500L4.500 2l1-1.500H8M4.500 2v13M1 16.500h2.500l1-1.500 1 1.500H8" />
          </Pointer>
        </Page>
        <VScroll><VThumb /></VScroll>
      </DocArea>
      <HScroll><HThumb /></HScroll>

      <StatusBar>
        <StatusItem $w={90}>Page 2 of 2</StatusItem>
        <StatusItem $w={84}>218 words</StatusItem>
        <StatusItem $w={95}>English (UK)</StatusItem>
        <StatusItem $w={180}>Editor Suggestions: Showing</StatusItem>
        <StatusRight>
          <Minus size={14} strokeWidth={1.3} />
          <Slider><SliderThumb /></Slider>
          <Plus size={14} strokeWidth={1.3} />
          <StatusItem $w={53} $ml={29}>136%</StatusItem>
          <StatusItem $w={56} $gap={6}><Maximize size={15} strokeWidth={1.3} />Fit</StatusItem>
          <span>Give Feedback to Microsoft</span>
        </StatusRight>
      </StatusBar>

      <DownloadBar>
        <DownloadItem>
          <DocxIcon /><DownloadName>ASSET DISPOSAL....docx</DownloadName><ChevronUp size={14} />
        </DownloadItem>
        <DownloadItem $w={204} $ml={15}>
          <DocxIcon /><DownloadName>Document 105.docx</DownloadName><ChevronUp size={14} />
        </DownloadItem>
        <DownloadItem $w={436}>
          <DownloadName $right>lf</DownloadName><ChevronUp size={14} />
        </DownloadItem>
        <DownloadItem $ml={15}>
          <DocxIcon /><DownloadName>SCI 100 Module....docx</DownloadName><ChevronUp size={14} />
        </DownloadItem>
        <ShowAll>Show all</ShowAll>
        <CloseBar><X size={16} strokeWidth={1.6} /></CloseBar>
      </DownloadBar>
      <ShareNotice>
        <Grip>||</Grip>
        Screen Recorder is sharing your screen.
        <StopBtn>Stop sharing</StopBtn>
        <HideLink>Hide</HideLink>
      </ShareNotice>

      <Taskbar>
        <StartBtn><WinLogo /></StartBtn>
        <TaskSearch>
          <MirrorSearch size={17} strokeWidth={1.4} />
          Type here to search
          <CactusArt />
        </TaskSearch>
        <TaskApp><TaskView /></TaskApp>
        <TaskApp><EdgeIcon /></TaskApp>
        <TaskApp $on><FolderIcon /></TaskApp>
        <TaskApp $on><TaskOffice kind="w" /></TaskApp>
        <TaskApp $on $hi><ChromeIcon /></TaskApp>
        <TaskApp $on $pr={12}><TaskOffice kind="x" /></TaskApp>
        <TaskApp $on><MailIcon /></TaskApp>
        <TaskApp $on><RecorderIcon /></TaskApp>
        <Tray>
          <Weather><WeatherIcon />18°C&nbsp; Mostly cloudy</Weather>
          <TrayIcon><ChevronUp size={16} strokeWidth={1.4} /></TrayIcon>
          <TrayIcon><RecordDot /></TrayIcon>
          <TrayIcon><CamTray /></TrayIcon>
          <TrayIcon><BatteryTray /></TrayIcon>
          <TrayIcon><Mic size={16} fill="#fff" /></TrayIcon>
          <TrayIcon $w={22} $ml={2}><Wifi size={15} /></TrayIcon>
          <TrayIcon $w={18}><Volume2 size={15} strokeWidth={1.4} /></TrayIcon>
          <TrayIcon $w={20} $ml={8.5}><PenTray /></TrayIcon>
          <Clock>10:19 pm<br />12/06/2023</Clock>
          <Notif><NotifIcon /></Notif>
        </Tray>
      </Taskbar>
    </Screen>
  );
}
